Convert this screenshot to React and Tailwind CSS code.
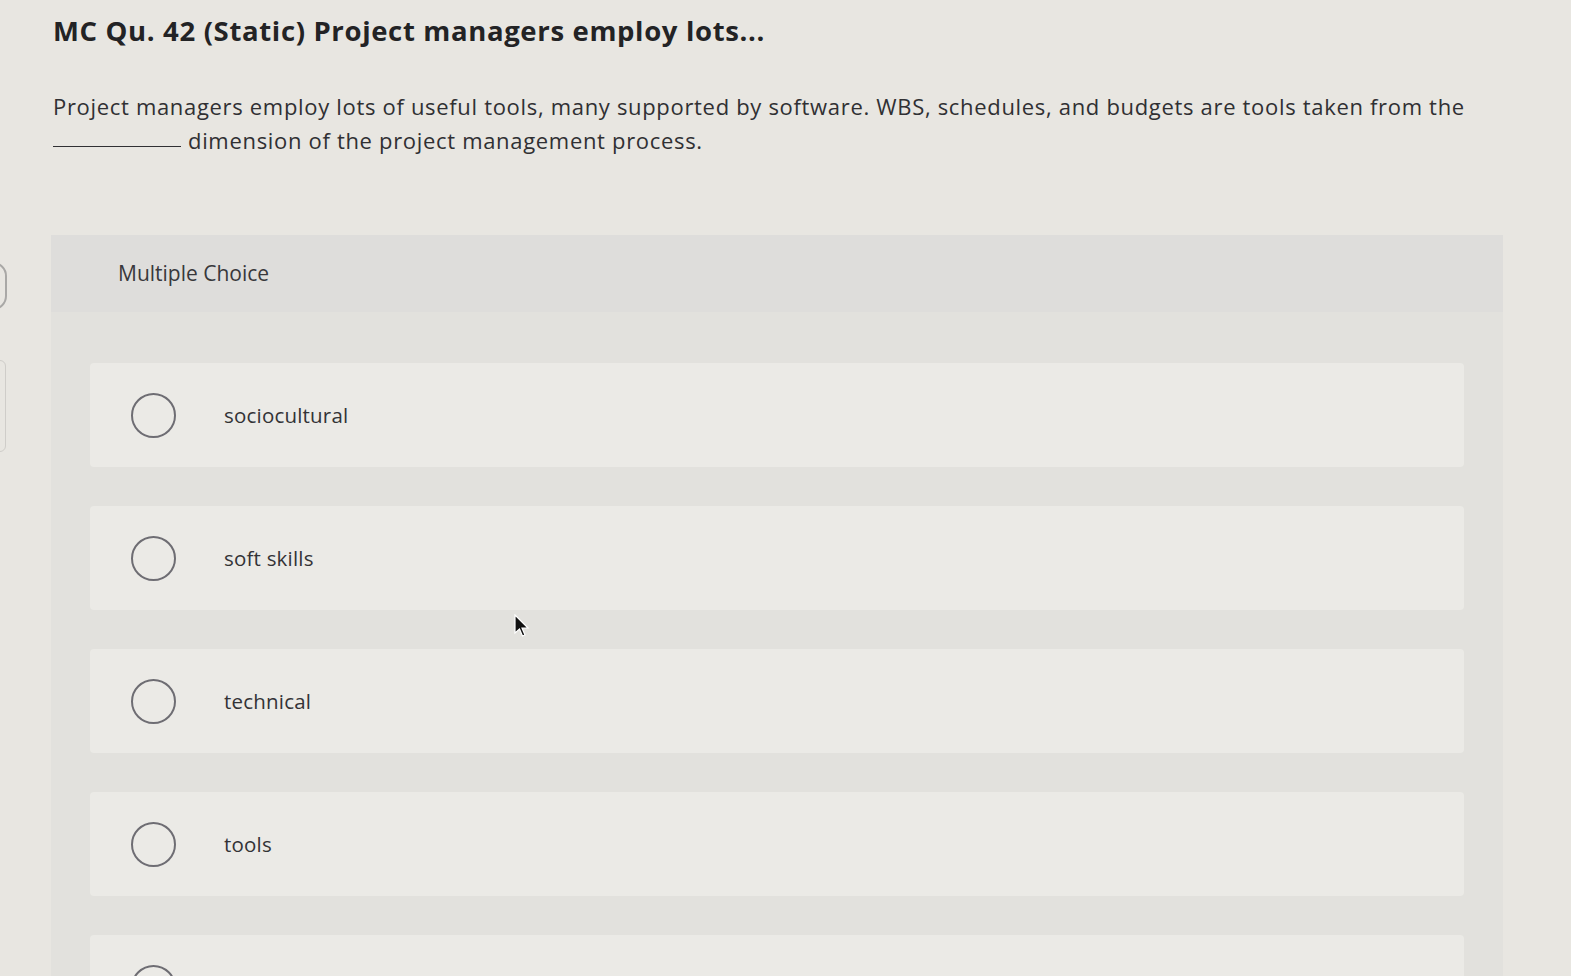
export default function App() {
  const options = ["sociocultural", "soft skills", "technical", "tools", ""];
  return (
    <div
      className="w-[1571px] h-[976px] overflow-hidden bg-[#e8e6e1] relative"
      style={{ fontFamily: "'Open Sans', Lato, sans-serif" }}
    >
      {/* cropped side controls at the left edge */}
      <div className="absolute left-[-30px] top-[262px] w-[37px] h-[48px] rounded-[14px] border-2 border-[#a9a8a6]" />
      <div className="absolute left-[-30px] top-[360px] w-[36px] h-[92px] rounded-md border border-[#cfcdc9]" />

      <div className="pl-[53px] pt-[12px]">
        <h1 className="text-[27.5px] font-bold text-[#232325] leading-[38px] tracking-[0.65px]">
          MC Qu. 42 (Static) Project managers employ lots...
        </h1>
        <p className="mt-[39px] text-[22px] leading-[34px] text-[#303033] whitespace-nowrap tracking-[0.68px]">
          Project managers employ lots of useful tools, many supported by software. WBS, schedules, and budgets are tools taken from the
          <br />
          <span className="inline-block w-[128px] h-[1px] bg-[#303033] align-[2px] mr-[7px]" />
          dimension of the project management process.
        </p>
      </div>

      <div className="ml-[51px] mt-[78px] w-[1452px] bg-[#e2e1dd]">
        <div className="h-[77px] bg-[#dedddb] flex items-center pl-[67px]">
          <span className="text-[21px] text-[#38383b]">Multiple Choice</span>
        </div>
        <div className="pt-[51px] flex flex-col gap-[39px] px-[39px]">
          {options.map((o, i) => (
            <div
              key={i}
              className="h-[104px] bg-[#ebeae6] rounded-sm flex items-center pl-[41px]"
            >
              <div className="w-[45px] h-[45px] rounded-full border-2 border-[#6e6d73] shrink-0" />
              <span className="ml-[48px] text-[20.5px] tracking-[0.2px] text-[#333336]">{o}</span>
            </div>
          ))}
        </div>
      </div>

      {/* mouse cursor */}
      <svg className="absolute left-[514px] top-[614px]" width="16" height="26" viewBox="0 0 16 26">
        <path d="M1 1 L1 19 L5.5 15 L8.5 22 L11 21 L8 14 L14 14 Z" fill="#111" stroke="#fff" strokeWidth="1.2" />
      </svg>
    </div>
  );
}
